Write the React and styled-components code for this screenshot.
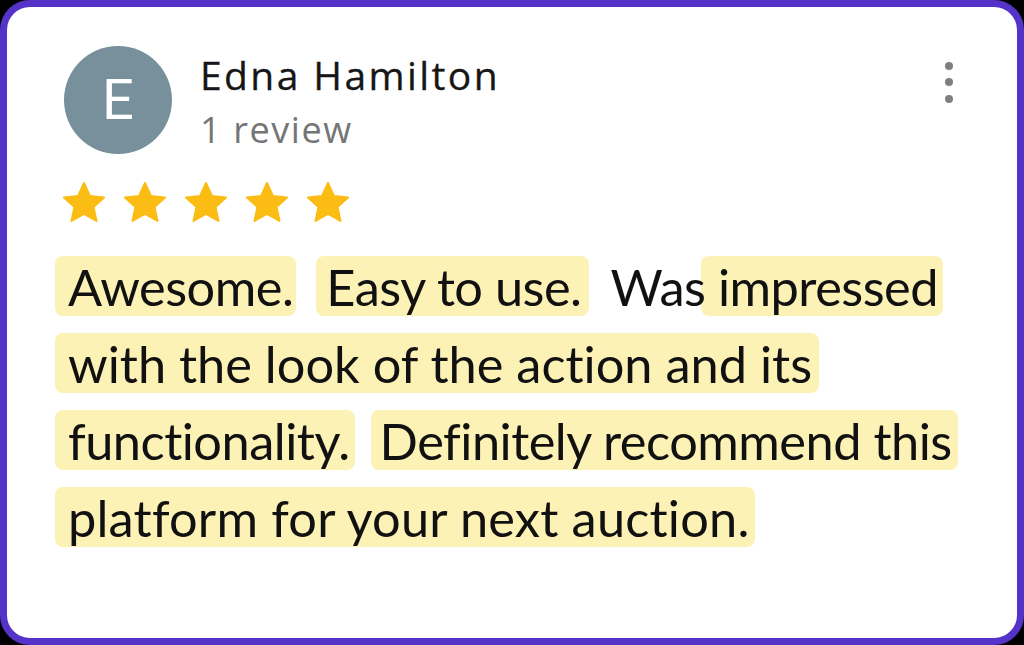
import React from "react";
import styled, { createGlobalStyle } from "styled-components";

const Global = createGlobalStyle`
  html, body { margin: 0; padding: 0; background: #000; }
  #root { width: 1024px; height: 645px; }
`;

const Card = styled.div`
  box-sizing: border-box;
  width: 1024px;
  height: 645px;
  background: #fff;
  border: 7px solid #5533c9;
  border-radius: 30px;
  padding: 39px 52px 0 57px;
  display: flex;
  flex-direction: column;
`;

const Header = styled.div`
  display: flex;
  align-items: flex-start;
`;

const Avatar = styled.div`
  width: 108px;
  height: 108px;
  border-radius: 50%;
  background: #78909c;
  color: #fff;
  font-family: "Roboto", "Liberation Sans", sans-serif;
  font-size: 56px;
  font-weight: 400;
  display: flex;
  align-items: center;
  justify-content: center;
  flex-shrink: 0;
`;

const Identity = styled.div`
  margin-left: 28px;
  padding-top: 7px;
  display: flex;
  flex-direction: column;
  flex: 1;
`;

const Name = styled.div`
  font-family: "Open Sans", "Liberation Sans", sans-serif;
  font-size: 39px;
  line-height: 44px;
  color: #161616;
  letter-spacing: 2.4px;
  -webkit-text-stroke: 0.3px #161616;
`;

const Meta = styled.div`
  margin-top: 11px;
  font-family: "Open Sans", "Liberation Sans", sans-serif;
  font-size: 36px;
  line-height: 44px;
  color: #757575;
  letter-spacing: 1.6px;
`;

const MenuButton = styled.button`
  width: 32px;
  height: 60px;
  margin-top: 6px;
  border: none;
  background: transparent;
  padding: 0;
  display: flex;
  flex-direction: column;
  align-items: center;
  justify-content: center;
  gap: 8.5px;
`;

const Dot = styled.span`
  width: 8px;
  height: 8px;
  border-radius: 50%;
  background: #7f7f7f;
`;

const Stars = styled.div`
  display: flex;
  gap: 19px;
  margin-top: 28px;
  margin-left: -1px;
`;

const Review = styled.div`
  margin-top: 34px;
  margin-left: -9px;
  display: flex;
  flex-direction: column;
  gap: 17px;
  font-family: "Lato", "Liberation Sans", sans-serif;
  font-size: 50.5px;
  font-variant-ligatures: none;
  color: #111;
`;

const Line = styled.div`
  display: flex;
  align-items: center;
  height: 60px;
  gap: ${(p) => p.$gap || 20}px;
  letter-spacing: ${(p) => p.$spacing || 0}px;
`;

const Highlight = styled.span`
  display: inline-flex;
  align-items: center;
  height: 60px;
  padding: 0 ${(p) => p.$pr ?? 8}px 0 ${(p) => p.$pl ?? 13}px;
  margin-left: ${(p) => p.$ml || 0}px;
  background: #fdf2b6;
  border-radius: 8px;
  white-space: pre;
`;

const Plain = styled.span`
  position: relative;
  z-index: 1;
  display: inline-flex;
  align-items: center;
  height: 60px;
  margin-left: ${(p) => p.$ml || 0}px;
  white-space: pre;
`;

const Star = () => (
  <svg width="42" height="40" viewBox="1.3 0.7 21.4 20.4">
    <path
      d="M12 1.2l3.05 6.6 7.2.8-5.37 4.88 1.5 7.1L12 17l-6.38 3.58 1.5-7.1L1.75 8.6l7.2-.8z"
      fill="#fbbd14"
      stroke="#fbbd14"
      strokeWidth="1"
      strokeLinejoin="round"
    />
  </svg>
);

export default function App() {
  return (
    <>
      <Global />
      <Card>
        <Header>
          <Avatar>E</Avatar>
          <Identity>
            <Name>Edna Hamilton</Name>
            <Meta>1 review</Meta>
          </Identity>
          <MenuButton aria-label="More options">
            <Dot />
            <Dot />
            <Dot />
          </MenuButton>
        </Header>
        <Stars>
          {[0, 1, 2, 3, 4].map((i) => (
            <Star key={i} />
          ))}
        </Stars>
        <Review>
          <Line $gap={20} $spacing={-0.5}>
            <Highlight $pr={3}>Awesome.</Highlight>
            <Highlight $pl={10} $pr={7}>Easy to use.</Highlight>
            <Plain $ml={2}>Was</Plain>
            <Highlight $pl={4} $pr={5} $ml={-24}>{" impressed"}</Highlight>
          </Line>
          <Line>
            <Highlight $pr={7}>with the look of the action and its</Highlight>
          </Line>
          <Line $gap={16} $spacing={-0.5}>
            <Highlight $pr={5}>functionality.</Highlight>
            <Highlight $pl={9} $pr={6}>Definitely recommend this</Highlight>
          </Line>
          <Line $spacing={0.2}>
            <Highlight $pr={5}>platform for your next auction.</Highlight>
          </Line>
        </Review>
      </Card>
    </>
  );
}
